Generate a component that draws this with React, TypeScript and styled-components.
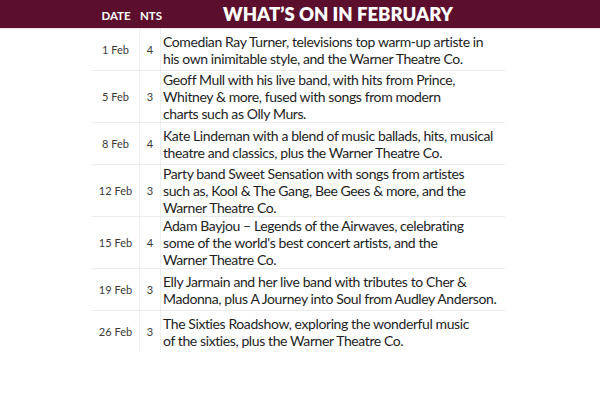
import React from 'react';
import styled, { createGlobalStyle } from 'styled-components';

interface Show {
  date: string;
  nights: number;
  lines: string[];
}

// line breaks follow the printed listing
const shows: Show[] = [
  { date: '1 Feb', nights: 4, lines: ['Comedian Ray Turner, televisions top warm-up artiste in', 'his own inimitable style, and the Warner Theatre Co.'] },
  { date: '5 Feb', nights: 3, lines: ['Geoff Mull with his live band, with hits from Prince,', 'Whitney & more, fused with songs from modern', 'charts such as Olly Murs.'] },
  { date: '8 Feb', nights: 4, lines: ['Kate Lindeman with a blend of music ballads, hits, musical', 'theatre and classics, plus the Warner Theatre Co.'] },
  { date: '12 Feb', nights: 3, lines: ['Party band Sweet Sensation with songs from artistes', 'such as, Kool & The Gang, Bee Gees & more, and the', 'Warner Theatre Co.'] },
  { date: '15 Feb', nights: 4, lines: ['Adam Bayjou – Legends of the Airwaves, celebrating', "some of the world's best concert artists, and the", 'Warner Theatre Co.'] },
  { date: '19 Feb', nights: 3, lines: ['Elly Jarmain and her live band with tributes to Cher &', 'Madonna, plus A Journey into Soul from Audley Anderson.'] },
  { date: '26 Feb', nights: 3, lines: ['The Sixties Roadshow, exploring the wonderful music', 'of the sixties, plus the Warner Theatre Co.'] },
];

const GlobalStyle = createGlobalStyle`
  html, body {
    margin: 0;
    padding: 0;
    background: #ffffff;
    font-family: Lato, "Open Sans", sans-serif;
  }
`;

const Page = styled.div`
  width: 600px;
  height: 400px;
  overflow: hidden;
`;

const Header = styled.div`
  display: grid;
  grid-template-columns: 92px 48px 21px 1fr;
  align-items: center;
  height: 28px;
  background: #5c0f2d;
  color: #ffffff;
  border-bottom: 1px solid #f3e3e8;
`;

const HeadLabel = styled.div`
  font-size: 11.5px;
  font-weight: 700;
  text-align: center;
  padding-top: 3px;
`;

const Title = styled.h1`
  margin: 0;
  padding-left: 62px;
  font-size: 18.5px;
  font-weight: 800;
`;

const Table = styled.div`
  margin-left: 92px;
  width: 413px;
`;

const Row = styled.div<{ last?: boolean }>`
  display: grid;
  grid-template-columns: 48px 21px 1fr;
  min-height: 41px;
  border-bottom: 1px solid ${p => (p.last ? 'transparent' : '#ebebeb')};
`;

const SmallCell = styled.div`
  display: flex;
  align-items: center;
  justify-content: center;
  font-size: 11px;
  color: #3a3a3a;
  border-right: 1px solid #efefef;
`;

const Description = styled.div`
  display: flex;
  flex-direction: column;
  justify-content: center;
  padding: 0 0 0 2px;
  font-size: 14px;
  letter-spacing: -0.4px;
  line-height: 17px;
  color: #1e1e1e;
  white-space: nowrap;
`;

const App: React.FC = () => {
  return (
    <Page>
      <GlobalStyle />
      <Header>
        <span />
        <HeadLabel>DATE</HeadLabel>
        <HeadLabel>NTS</HeadLabel>
        <Title>WHAT’S ON IN FEBRUARY</Title>
      </Header>
      <Table>
        {shows.map((s, i) => (
          <Row key={s.date} last={i === shows.length - 1}>
            <SmallCell>{s.date}</SmallCell>
            <SmallCell>{s.nights}</SmallCell>
            <Description>
              {s.lines.map(l => (
                <span key={l}>{l}</span>
              ))}
            </Description>
          </Row>
        ))}
      </Table>
    </Page>
  );
};

export default App;
